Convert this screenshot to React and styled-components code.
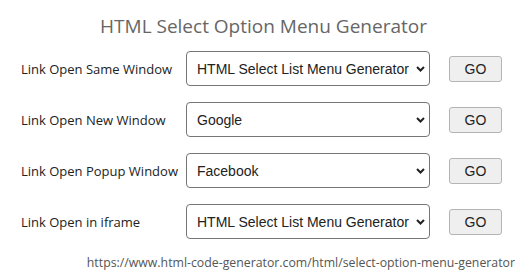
import React from "react";
import styled, { createGlobalStyle } from "styled-components";

const GlobalStyle = createGlobalStyle`
  body {
    margin: 0;
    background: #fff;
    font-family: "Open Sans", "Noto Sans", sans-serif;
  }
`;

const Page = styled.div`
  width: 527px;
  height: 275px;
  padding-top: 12px;
  box-sizing: border-box;
`;

const Title = styled.h2`
  margin: 0 0 11px;
  text-align: center;
  font-size: 19px;
  font-weight: 400;
  line-height: 28px;
  color: #666;
`;

const Form = styled.div`
  display: grid;
  grid-template-columns: 165px 244px auto;
  row-gap: 16px;
  align-items: center;
  padding-left: 21px;
`;

const Label = styled.label`
  font-size: 13px;
  color: #222;
  white-space: nowrap;
`;

const SelectWrap = styled.div`
  position: relative;
  height: 35px;
`;

const Select = styled.select`
  appearance: none;
  width: 100%;
  height: 100%;
  box-sizing: border-box;
  border: 1px solid #767676;
  border-radius: 4px;
  background: #fff;
  padding: 0 16px 0 10px;
  font-family: "Liberation Sans", Arial, sans-serif;
  font-size: 14px;
  color: #222;
`;

const Chevron = styled.svg`
  position: absolute;
  right: 5px;
  top: 15px;
  pointer-events: none;
`;

const GoButton = styled.button`
  justify-self: start;
  margin-left: 19px;
  height: 26px;
  width: 53px;
  box-sizing: border-box;
  border: 1px solid #b4b4b4;
  border-radius: 3px;
  background: #efefef;
  font-family: "Liberation Sans", Arial, sans-serif;
  font-size: 14px;
  color: #222;
  padding: 0;
`;

const Footer = styled.div`
  margin-top: 15px;
  padding-right: 12px;
  text-align: right;
  font-size: 12.3px;
  color: #555;
`;

const rows = [
  { label: "Link Open Same Window", value: "HTML Select List Menu Generator" },
  { label: "Link Open New Window", value: "Google" },
  { label: "Link Open Popup Window", value: "Facebook" },
  { label: "Link Open in iframe", value: "HTML Select List Menu Generator" },
];

function App() {
  return (
    <Page>
      <GlobalStyle />
      <Title>HTML Select Option Menu Generator</Title>
      <Form>
        {rows.map((row, i) => (
          <React.Fragment key={i}>
            <Label>{row.label}</Label>
            <SelectWrap>
              <Select defaultValue={row.value}>
                <option>{row.value}</option>
              </Select>
              <Chevron width="9" height="6" viewBox="0 0 9 6">
                <path d="M1 1 L4.5 4.5 L8 1" fill="none" stroke="#222" strokeWidth="2" />
              </Chevron>
            </SelectWrap>
            <GoButton>GO</GoButton>
          </React.Fragment>
        ))}
      </Form>
      <Footer>https://www.html-code-generator.com/html/select-option-menu-generator</Footer>
    </Page>
  );
}

export default App;
